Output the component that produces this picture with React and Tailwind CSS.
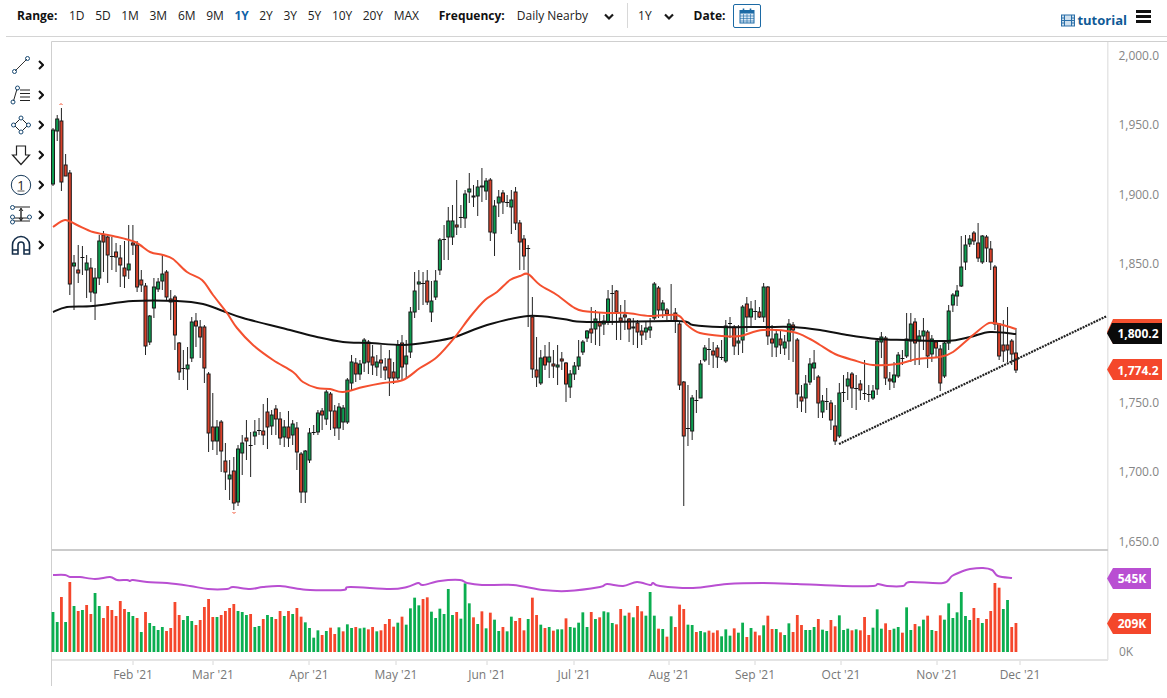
import { Fragment } from "react";

const ranges = ["1D", "5D", "1M", "3M", "6M", "9M", "1Y", "2Y", "3Y", "5Y", "10Y", "20Y", "MAX"];

// top, bottom, high, low of each candle, in page pixels
const candles = [
    [130,184,128,186,"g"],[119,131,115,141,"g"],[121,182,108,191,"r"],[165,176,154,176,"r"],[173,284,170,295,"r"],
    [263,266,255,310,"g"],[270,273,245,283,"r"],[257,257,246,275,"g"],[263,270,255,298,"g"],[268,292,258,302,"r"],
    [278,293,268,320,"g"],[241,278,235,285,"g"],[235,242,231,272,"r"],[237,255,235,283,"r"],[256,256,237,270,"r"],
    [252,257,243,272,"r"],[258,265,245,287,"r"],[268,276,241,288,"r"],[264,270,225,279,"g"],[243,245,225,255,"r"],
    [245,287,241,292,"r"],[280,285,270,292,"r"],[286,346,283,355,"r"],[316,342,315,345,"g"],[287,308,278,318,"g"],
    [282,289,278,292,"g"],[274,281,255,290,"g"],[272,297,270,300,"r"],[299,302,290,320,"r"],[297,335,295,350,"r"],
    [343,372,342,380,"r"],[368,368,350,380,"r"],[365,369,347,390,"g"],[322,358,317,362,"g"],[321,326,313,347,"r"],
    [327,337,320,358,"r"],[327,368,325,383,"r"],[374,433,372,452,"r"],[427,441,393,450,"r"],[427,441,420,455,"g"],
    [422,451,420,472,"r"],[461,472,443,490,"r"],[475,479,460,500,"g"],[471,503,457,510,"r"],[449,502,445,506,"g"],
    [443,453,435,475,"g"],[438,441,420,460,"r"],[445,445,432,477,"r"],[432,436,420,445,"g"],[430,430,418,435,"r"],
    [431,435,404,445,"r"],[412,427,398,449,"r"],[415,426,410,435,"g"],[409,419,405,435,"r"],[419,438,412,445,"r"],
    [427,437,420,447,"g"],[427,438,411,447,"r"],[424,435,420,445,"g"],[428,452,422,470,"r"],[454,492,452,503,"r"],
    [451,492,450,503,"g"],[433,460,428,463,"g"],[432,432,425,435,"r"],[413,432,410,435,"g"],[411,415,408,430,"r"],
    [392,419,390,425,"g"],[394,411,392,430,"r"],[411,428,405,436,"r"],[407,428,403,440,"g"],[408,422,405,430,"g"],
    [380,422,378,424,"g"],[362,383,355,390,"g"],[363,374,358,382,"r"],[364,374,360,380,"g"],[340,363,338,372,"g"],
    [342,362,340,374,"r"],[357,365,345,375,"r"],[362,367,355,376,"g"],[360,363,345,378,"r"],[367,370,358,380,"r"],
    [359,378,350,396,"r"],[372,378,362,384,"r"],[345,378,340,380,"g"],[343,367,335,380,"r"],[356,364,340,378,"g"],
    [312,352,307,358,"g"],[291,312,272,318,"g"],[282,284,270,310,"g"],[283,283,272,305,"r"],[281,302,270,305,"r"],
    [301,312,281,322,"g"],[281,297,270,300,"g"],[240,270,238,275,"g"],[239,239,225,260,"r"],[221,237,207,260,"g"],
    [221,237,205,245,"g"],[225,227,180,235,"r"],[217,217,205,228,"r"],[194,218,190,228,"g"],[189,192,173,203,"g"],
    [196,197,185,207,"r"],[187,196,180,216,"g"],[186,187,168,202,"r"],[181,191,178,200,"g"],[180,232,178,241,"r"],
    [206,233,200,256,"g"],[197,203,190,217,"g"],[193,202,190,214,"r"],[202,202,195,207,"r"],[200,207,190,234,"g"],
    [192,223,187,230,"r"],[223,242,220,270,"r"],[239,256,235,270,"r"],[248,248,245,327,"r"],[317,369,297,378,"r"],
    [370,377,337,387,"r"],[358,383,350,385,"g"],[357,365,345,370,"r"],[357,362,342,378,"g"],[364,366,350,378,"r"],
    [365,367,345,385,"g"],[359,361,352,370,"r"],[363,384,362,402,"r"],[374,387,370,398,"g"],[366,374,362,380,"g"],
    [357,366,340,370,"g"],[342,352,340,355,"g"],[331,338,330,342,"g"],[329,333,307,343,"r"],[319,329,310,345,"g"],
    [322,326,312,346,"r"],[321,324,315,335,"g"],[299,322,290,325,"g"],[293,293,285,325,"r"],[291,312,290,340,"r"],
    [318,321,305,340,"r"],[315,317,300,330,"r"],[319,329,318,342,"r"],[327,328,318,345,"g"],[323,332,320,348,"r"],
    [331,335,325,345,"r"],[328,332,322,340,"g"],[327,330,318,338,"g"],[284,318,282,320,"g"],[288,310,286,318,"r"],
    [303,310,300,318,"g"],[310,314,308,320,"r"],[314,314,284,320,"r"],[313,321,308,333,"r"],[324,385,322,390,"r"],
    [382,436,381,506,"r"],[428,428,385,446,"r"],[398,431,395,440,"g"],[400,400,390,413,"r"],[364,398,360,398,"g"],
    [348,360,345,362,"g"],[349,349,338,365,"r"],[351,355,342,368,"r"],[348,357,345,368,"r"],[357,357,340,360,"r"],
    [326,361,320,363,"g"],[323,323,317,338,"g"],[327,346,325,355,"r"],[341,343,325,355,"g"],[307,340,305,353,"g"],
    [304,317,297,332,"r"],[309,317,301,328,"g"],[311,311,300,320,"r"],[312,317,307,318,"r"],[287,317,283,322,"g"],
    [287,336,286,345,"r"],[339,343,325,357,"r"],[334,347,330,357,"g"],[339,345,330,354,"r"],[342,348,335,355,"g"],
    [324,341,319,360,"g"],[325,330,322,362,"r"],[340,394,338,408,"r"],[397,401,385,412,"r"],[384,398,375,413,"g"],
    [364,382,358,385,"g"],[363,368,350,380,"g"],[377,403,375,418,"r"],[401,412,395,418,"g"],[401,401,388,410,"r"],
    [403,420,400,430,"r"],[426,441,405,445,"r"],[393,436,383,438,"g"],[392,392,375,402,"r"],[379,386,372,400,"g"],
    [374,388,372,408,"r"],[388,388,375,410,"r"],[384,390,380,400,"r"],[393,393,360,400,"r"],[394,394,385,402,"r"],
    [391,398,385,400,"g"],[341,389,338,395,"g"],[337,342,332,358,"g"],[338,378,336,385,"r"],[379,381,372,390,"r"],
    [375,382,362,388,"g"],[355,376,352,378,"g"],[358,358,350,365,"r"],[339,356,313,358,"g"],[324,341,313,362,"g"],
    [322,343,318,365,"r"],[336,341,330,365,"g"],[331,336,318,350,"g"],[332,356,330,368,"r"],[339,354,335,362,"g"],
    [342,348,340,358,"r"],[349,383,345,391,"r"],[343,376,342,378,"g"],[311,343,305,350,"g"],[295,305,293,312,"g"],
    [291,296,285,306,"g"],[267,286,236,287,"g"],[245,262,235,270,"g"],[239,244,235,247,"g"],[233,241,231,245,"r"],
    [243,258,223,262,"r"],[236,262,235,264,"g"],[237,248,235,262,"r"],[249,262,241,270,"r"],[267,324,265,330,"r"],
    [324,356,323,360,"r"],[345,351,320,362,"r"],[345,350,307,362,"r"],[341,354,339,365,"r"],[353,370,328,373,"r"],
];

// height of each volume bar, read as colour + top of bar
const volumeA = "g612 g622 r597 g622 r582 g606 r611 g610 r605 r614 g593 g606 r618 r606 r610 r616 r601 r609 g612 g616 r618 g632 r612 g623 g626 g630 g627 r631 r628 r602 r615 g620 g616 g621 r625 r620 r607 r599 r617 g617 r615 r611 r608 r604 g611 g612 g615 r614 g627 g626 r619 g615 g617 r619 r611 g616 r611 g614 r608";
const volumeB = "r140 g157 g174 g203 g181 r195 g183 r173 r192 g172 r184 g163 g174 r171 g175 g173 r178 r171 g184 r181 r162 r147 r170 g158 r140 g164 g115 g83 g106 r87 r82 g125 g144 g116 g132 g57 g135 r126 g146 g40 g100 r142 g162 r124 g175 r128 g149 g183 r171 g184 g140 r153 r144 r181 g147 r83 r135 g164 r174 g171 r182 g178 g178 r145 g171 g173 g158 g127 g171 r126 g147 r142 g124 g127 g159 r163 r117 g137 r128 g142 r108 r124 g137 g66";
const volumeC = "g137 r176 g177 r200 g139 r171 r104 r117 g164 g165 r186 g183 g187 r182 r188 r181 g199 g178 g197 r175 g188 g158 r201 g174 r185 r196 g166 r137 r177 g177 r187 g195 g160 r186 r135 r165 g180 g180 g171 r147 g179 g183 r150 r169 g136 g180 g176 r181 g178 r181 r141 r195 g173 g118 g176 r160 r180 g176 g171 r188 g112 g180 r162 g169 g149 r137 g180 r183 r136 g149 g100 g144 g127 g66 g138 g150 r114 r144 g159 r147 r123 r39 r53";
const parseBars = (text, toTop) =>
    text.split(" ").map((bar) => ({ color: bar[0], top: toTop(Number(bar.slice(1))) }));
const volume = [
    ...parseBars(volumeA, (y) => y),
    ...parseBars(volumeB + " " + volumeC, (y) => 570 + y / 3),
    { color: "g", top: 609 },
    { color: "g", top: 600 },
    { color: "r", top: 627 },
    { color: "r", top: 623 },
];

const redAverage = [[53,227],[65,220],[77,225],[93,232],[113,236],[135,242],[150,252],[163,255],[173,259],[187,272],[202,280],[213,295],[227,313],[237,328],[253,345],[273,360],[293,372],[303,382],[317,388],[330,389],[343,392],[363,387],[383,383],[403,380],[420,368],[437,357],[455,337],[470,317],[485,300],[497,292],[510,280],[520,276],[528,274],[540,285],[557,295],[573,307],[583,311],[607,313],[627,313],[650,316],[677,315],[687,325],[700,333],[723,336],[740,336],[763,330],[793,332],[810,339],[820,345],[835,354],[853,360],[873,365],[897,364],[917,359],[940,357],[953,352],[973,335],[987,324],[993,323],[1003,325],[1016,329]];
const blackAverage = [[53,312],[67,307],[93,306],[133,301],[177,301],[203,304],[223,311],[243,318],[290,330],[317,337],[343,342],[370,343],[403,345],[430,342],[455,337],[487,325],[528,316],[563,319],[587,322],[677,321],[693,325],[720,327],[763,327],[793,327],[820,330],[847,335],[877,339],[907,340],[947,341],[970,337],[990,332],[1016,334]];
const purpleAverage = [[53,575],[65,575],[70,577],[80,577],[95,579],[110,577],[117,580],[127,580],[130,581],[133,580],[147,582],[167,583],[190,586],[208,589],[227,589],[233,587],[250,589],[263,587],[280,586],[300,589],[310,590],[343,590],[350,587],[390,589],[407,587],[418,583],[423,585],[440,581],[460,580],[467,583],[482,585],[513,585],[543,590],[567,591],[600,587],[607,584],[623,586],[637,582],[650,585],[653,583],[660,586],[693,588],[727,584],[763,583],[797,584],[843,586],[873,586],[878,584],[887,586],[903,586],[910,582],[943,583],[952,576],[963,571],[970,569],[983,568],[992,570],[998,576],[1012,578]];

// 1,800.0 sits under the last price badge so it is left out
const priceLabels = [["2,000.0",56],["1,950.0",125],["1,900.0",195],["1,850.0",264],["1,750.0",403],["1,700.0",472],["1,650.0",542]];
const monthLabels = [["Feb '21",133],["Mar '21",213],["Apr '21",309],["May '21",396],["Jun '21",487],["Jul '21",574],["Aug '21",669],["Sep '21",755],["Oct '21",841],["Nov '21",937],["Dec '21",1020]];

const barX = (i) => 53 + i * 4.205;

// catmull-rom through the read off points so the averages stay round
function smoothPath(points) {
    let d = `M${points[0][0]} ${points[0][1]}`;
    for (let i = 0; i < points.length - 1; i++) {
        const p0 = points[Math.max(i - 1, 0)];
        const p1 = points[i];
        const p2 = points[i + 1];
        const p3 = points[Math.min(i + 2, points.length - 1)];
        const c1x = p1[0] + (p2[0] - p0[0]) / 6;
        const c1y = p1[1] + (p2[1] - p0[1]) / 6;
        const c2x = p2[0] - (p3[0] - p1[0]) / 6;
        const c2y = p2[1] - (p3[1] - p1[1]) / 6;
        d += ` C${c1x} ${c1y} ${c2x} ${c2y} ${p2[0]} ${p2[1]}`;
    }
    return d;
}

function Chevron({ className }) {
    return (
        <svg width="10" height="8" viewBox="0 0 10 8" className={className}>
            <path d="M1 1.5 L5 5.5 L9 1.5" fill="none" stroke="#1a1a1a" strokeWidth="2.2" />
        </svg>
    );
}

function ToolIcon({ children }) {
    return (
        <div className="h-[30px] flex items-center pl-[10px] gap-[6px]">
            <svg width="22" height="22" viewBox="0 0 22 22" fill="none" stroke="#222" strokeWidth="1">
                {children}
            </svg>
            <svg width="6" height="10" viewBox="0 0 6 10">
                <path d="M1 1 L5 5 L1 9" fill="none" stroke="#111" strokeWidth="2" />
            </svg>
        </div>
    );
}

function Toolbar() {
    const node = "#1a4a73";
    return (
        <div className="w-[51px] shrink-0 pt-[13px]">
            <ToolIcon>
                <path d="M5 17 L17 5" stroke="#333" />
                <circle cx="4.5" cy="17.5" r="2" stroke={node} />
                <circle cx="17.5" cy="4.5" r="2" stroke={node} />
            </ToolIcon>
            <ToolIcon>
                <path d="M3.5 17 L7 5" />
                <circle cx="3" cy="18" r="2" stroke={node} />
                <circle cx="7.5" cy="4" r="2" stroke={node} />
                <path d="M10 6 H20 M10 9.5 H20 M10 13 H20 M10 16.5 H20" strokeWidth="1.2" />
            </ToolIcon>
            <ToolIcon>
                <path d="M11 4 L18 11 L11 18 L4 11 Z" />
                <circle cx="11" cy="4" r="2" fill="#fff" stroke={node} />
                <circle cx="18.5" cy="11" r="2" fill="#fff" stroke={node} />
                <circle cx="11" cy="18" r="2" fill="#fff" stroke={node} />
                <circle cx="3.5" cy="11" r="2" fill="#fff" stroke={node} />
            </ToolIcon>
            <ToolIcon>
                <path d="M6.5 2 H15.5 V11 H19.5 L11 20.5 L2.5 11 H6.5 Z" strokeWidth="1.2" />
            </ToolIcon>
            <ToolIcon>
                <circle cx="11" cy="11" r="9.7" stroke="#173a5a" />
                <text x="11" y="15.5" textAnchor="middle" fontSize="13" fill="#222" stroke="none" fontFamily="Open Sans">1</text>
                <path d="M7.5 17 H14.5" stroke="#555" />
            </ToolIcon>
            <ToolIcon>
                <path d="M2 3 H20 M2 14 H20 M2 17 H20" />
                <path d="M11 4 V17" strokeWidth="1.4" />
                <path d="M9 7 L11 4.5 L13 7 M9 14 L11 16.5 L13 14" />
                <circle cx="2.5" cy="3.5" r="2" fill="#fff" stroke={node} />
                <circle cx="2.5" cy="13" r="2" fill="#fff" stroke={node} />
                <circle cx="2.5" cy="18" r="2" fill="#fff" stroke={node} />
                <circle cx="19.5" cy="13" r="2" fill="#fff" stroke={node} />
            </ToolIcon>
            <ToolIcon>
                <path d="M2.5 20 V11 A8.5 8.5 0 0 1 19.5 11 V20 H14 V11 A3 3 0 0 0 8 11 V20 Z" strokeWidth="1.6" stroke="#162f4a" />
                <path d="M2.5 16 H8 M14 16 H19.5" strokeWidth="1.4" stroke="#162f4a" />
            </ToolIcon>
        </div>
    );
}

function Header() {
    return (
        <div className="h-[37px] pb-[5px] flex items-center border-b border-[#d4d4d4] ml-[6px] pl-[11px] text-[12px] text-[#222]">
            <span className="font-bold text-[#111] w-[47px]">Range:</span>
            <div className="flex gap-[10.8px] ml-[5px] tracking-[-0.1px]">
                {ranges.map((range) => (
                    <span key={range} className={range === "1Y" ? "font-bold text-[#0f62a8]" : ""}>
                        {range}
                    </span>
                ))}
            </div>
            <span className="font-bold text-[#111] ml-[20px]">Frequency:</span>
            <span className="ml-[12px]">Daily Nearby</span>
            <Chevron className="ml-[16px] mt-[2px]" />
            <div className="w-px h-[25px] bg-[#d8d8d8] ml-[13px]" />
            <span className="ml-[10px]">1Y</span>
            <Chevron className="ml-[12px] mt-[2px]" />
            <span className="font-bold text-[#111] ml-[20px]">Date:</span>
            <button className="ml-[8px] w-[28px] h-[24px] border border-[#1c6aa5] rounded-[2px] flex items-center justify-center">
                <svg width="16" height="16" viewBox="0 0 16 16">
                    <rect x="1" y="2.5" width="14" height="12.5" fill="#dbe9f5" stroke="#1c6aa5" />
                    <rect x="1" y="2.5" width="14" height="3" fill="#1c6aa5" />
                    <path d="M4.5 .5 V3.5 M11.5 .5 V3.5" stroke="#1c6aa5" strokeWidth="1.6" />
                    <path d="M1 8 H15 M1 10.5 H15 M1 13 H15 M4.5 6 V15 M8 6 V15 M11.5 6 V15" stroke="#1c6aa5" strokeWidth=".6" />
                </svg>
            </button>
            <div className="ml-auto flex items-center mr-[16px]">
                <svg width="14" height="13" viewBox="0 0 14 13" className="translate-y-[5px]">
                    <rect x=".5" y="1" width="13" height="11" fill="#cfe0ee" stroke="#2a6fa8" />
                    <path d="M3.5 1 V12 M10.5 1 V12 M0 6.5 H14 M0 4 H3.5 M0 9 H3.5 M10.5 4 H14 M10.5 9 H14" stroke="#2a6fa8" />
                </svg>
                <span className="ml-[2px] translate-y-[5px] font-bold text-[13px] text-[#0f5a96]">tutorial</span>
                <div className="ml-[9px] w-[15px] flex flex-col gap-[2px] translate-y-[1px]">
                    <div className="h-[3px] bg-[#111]" />
                    <div className="h-[3px] bg-[#111]" />
                    <div className="h-[3px] bg-[#111]" />
                </div>
            </div>
        </div>
    );
}

function Chart() {
    const axisFont = { fontFamily: "Open Sans", fontSize: 12 };
    return (
        <svg width="1116" height="661" viewBox="51 37 1116 661" className="block">
            {/* frame */}
            <path d="M51.5 686 V41.5 H1167 M1107.5 41.5 V660" fill="none" stroke="#cfcfcf" />
            <rect x="1107" y="42" width="1.5" height="618" fill="#e6e6e6" />
            <rect x="52" y="549" width="1056" height="2" fill="#cbcbcb" />
            <rect x="52" y="659" width="1056" height="2" fill="#e4e4e4" />

            {/* candles */}
            {candles.map(([top, bottom, high, low, color], i) => (
                <Fragment key={i}>
                    <line x1={barX(i)} x2={barX(i)} y1={high} y2={low} stroke="#222" strokeWidth="1" />
                    {bottom - top < 1 ? (
                        <rect x={barX(i) - 2} y={top} width="4" height="1" fill="#111" />
                    ) : (
                        <rect
                            x={barX(i) - 1.5}
                            y={top}
                            width="3"
                            height={bottom - top}
                            fill={color === "g" ? "#0d9c50" : "#d8412a"}
                            stroke="#1a1a1a"
                            strokeWidth="1"
                        />
                    )}
                </Fragment>
            ))}
            <path d="M59.5 105 L61 103.5 L62.5 105" fill="none" stroke="#f4502f" />
            <path d="M232.5 512 L234 513.5 L235.5 512" fill="none" stroke="#f4502f" />

            {/* moving averages and trend line */}
            <path d={smoothPath(blackAverage)} fill="none" stroke="#111" strokeWidth="2" />
            <path d={smoothPath(redAverage)} fill="none" stroke="#f4502f" strokeWidth="2" />
            <line x1="839" y1="444" x2="1107" y2="316" stroke="#222" strokeWidth="2.2" strokeDasharray="2 1" />

            {/* volume */}
            {volume.map((bar, i) => (
                <rect
                    key={i}
                    x={barX(i) - 1.4}
                    y={bar.top}
                    width="2.8"
                    height={652 - bar.top}
                    fill={bar.color === "g" ? "#0bae50" : "#f5472c"}
                />
            ))}
            <path d={smoothPath(purpleAverage)} fill="none" stroke="#b94fd2" strokeWidth="2" />

            {/* price axis */}
            {priceLabels.map(([label, y]) => (
                <text key={label} x="1159" y={y + 4} textAnchor="end" fill="#858585" style={axisFont}>
                    {label}
                </text>
            ))}
            <path d="M1162 319 H1113 L1107 332 L1113 344 H1162 Z" fill="#f4502f" />
            <path d="M1162 323 H1112 L1107 333.5 L1113 344 H1162 Z" fill="#0a0a0a" />
            <text x="1138" y="337.5" textAnchor="middle" fill="#fff" fontWeight="700" style={axisFont}>1,800.2</text>
            <path d="M1162 359 H1113 L1107 369.5 L1113 380 H1162 Z" fill="#f4472b" />
            <text x="1138" y="374.5" textAnchor="middle" fill="#fff" fontWeight="700" style={axisFont}>1,774.2</text>

            {/* volume axis */}
            <path d="M1151 568 H1113 L1107 578.5 L1113 589 H1151 Z" fill="#b94fd2" />
            <text x="1132" y="582.5" textAnchor="middle" fill="#fff" fontWeight="700" style={axisFont}>545K</text>
            <path d="M1151 613 H1113 L1107 623.5 L1113 634 H1151 Z" fill="#f4472b" />
            <text x="1132" y="627.5" textAnchor="middle" fill="#fff" fontWeight="700" style={axisFont}>209K</text>
            <text x="1119" y="656" fill="#858585" style={axisFont}>0K</text>

            {/* time axis */}
            {monthLabels.map(([label, x]) => (
                <Fragment key={label}>
                    <line x1={x} x2={x} y1="661" y2="665" stroke="#d8d8d8" />
                    <text x={x} y="679" textAnchor="middle" fill="#777" style={axisFont}>
                        {label}
                    </text>
                </Fragment>
            ))}
        </svg>
    );
}

export default function App() {
    return (
        <div className="w-[1167px] h-[698px] bg-white overflow-hidden font-['Open_Sans',sans-serif]">
            <Header />
            <div className="flex">
                <Toolbar />
                <Chart />
            </div>
        </div>
    );
}
